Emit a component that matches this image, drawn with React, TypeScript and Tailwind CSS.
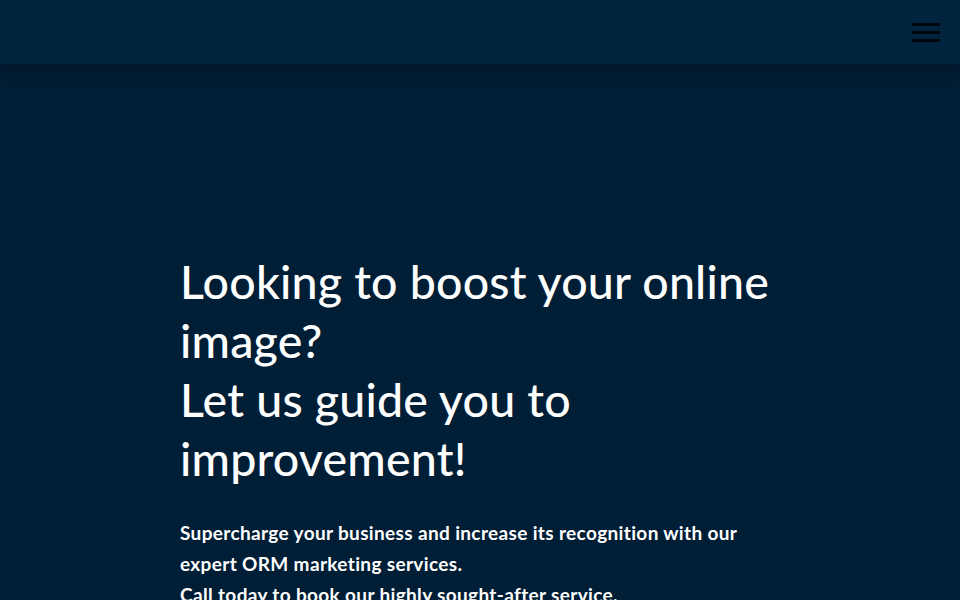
import React from "react";

export default function App() {
  return (
    <div
      className="min-h-[600px] w-full bg-[#001e35] text-white overflow-hidden"
      style={{ fontFamily: "Lato, 'Open Sans', sans-serif" }}
    >
      <header className="h-[64px] bg-[#00243e] flex items-center justify-end pr-5 shadow-[0_8px_14px_rgba(0,10,25,0.4)] relative z-10">
        <button className="flex flex-col gap-[5px] w-[28px]" aria-label="menu">
          <span className="block h-[3px] w-full bg-[#05050f]"></span>
          <span className="block h-[3px] w-full bg-[#05050f]"></span>
          <span className="block h-[3px] w-full bg-[#05050f]"></span>
        </button>
      </header>
      <main className="pt-[188px] pl-[180px] pr-[180px]">
        <h1 className="text-[46.5px] leading-[59px] font-medium tracking-[0.2px] max-w-[600px]">
          Looking to boost your online image?
          <br />
          Let us guide you to improvement!
        </h1>
        <p className="mt-[29px] text-[19px] leading-[31px] font-bold tracking-[0.35px] max-w-[600px]">
          Supercharge your business and increase its recognition with our expert ORM marketing services.
          <br />
          Call today to book our highly sought-after service.
        </p>
      </main>
    </div>
  );
}
